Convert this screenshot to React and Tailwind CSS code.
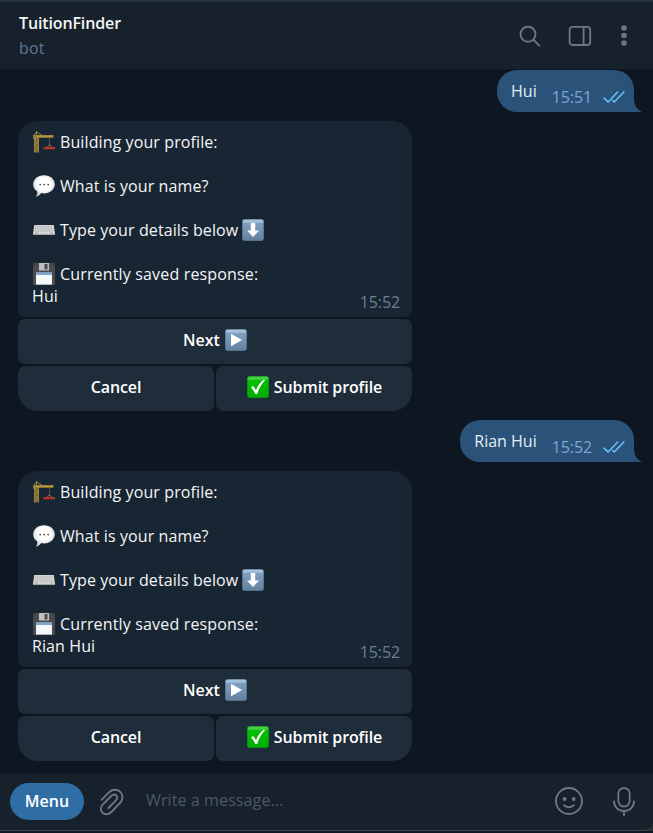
const Svg = ({ className, children, ...props }) => (
  <svg className={`shrink-0 ${className}`} fill="none" strokeLinecap="round" strokeLinejoin="round" {...props}>
    {children}
  </svg>
);

function Crane() {
  return (
    <Svg className="h-[22px] w-[22px]" viewBox="0 0 22 22">
      <rect x="1.500" y="4" width="4" height="17.500" fill="#6b6034" />
      <path d="M1.800 21.500V4M5.200 21.500V4" stroke="#b0923b" strokeWidth="1.100" strokeLinecap="butt" />
      <path d="M1.800 20l3.400-3-3.400-3 3.400-3-3.400-3 3.400-3" stroke="#a58a3a" strokeWidth="0.900" />
      <rect x="0" y="4" width="20.500" height="2.800" fill="#a0863a" />
      <path d="M4 5.500H19.500" stroke="#c9a445" strokeWidth="0.900" strokeDasharray="1.500 1" strokeLinecap="butt" />
      <path d="M3.500 0.600V4M3.500 1L8.500 4M3.500 1L1 4" stroke="#a58b3a" strokeWidth="0.900" />
      <rect x="0" y="4.400" width="2.600" height="3.400" fill="#8b7a42" />
      <path d="M16.500 7v7" stroke="#6c6850" strokeWidth="0.700" />
      <path d="M14.500 16l2-2.500 2 2.500" stroke="#8a8052" strokeWidth="1" />
      <rect x="10.500" y="16.200" width="11.500" height="2" fill="#c9371f" />
    </Svg>
  );
}

function Speech() {
  return (
    <Svg className="h-[22px] w-[22px]" viewBox="0 0 22 22">
      <defs>
        <radialGradient id="speech" cx="50%" cy="40%" r="60%">
          <stop offset="0.500" stopColor="#fff" />
          <stop offset="1" stopColor="#c9c9c9" />
        </radialGradient>
      </defs>
      <path d="M11 0.300C17.200 0.300 21.800 4.200 21.800 9.300S17.200 18.400 11 18.400c-1 0-1.900-.1-2.800-.3C6.800 20.200 5 21.500 2.800 21.800c1-1.500 1.700-3.300 1.500-5.200C1.600 14.900.200 12.300.200 9.300.200 4.200 4.800.300 11 .300Z" fill="url(#speech)" />
      <circle cx="7.200" cy="9.600" r="0.900" fill="#4c4c4c" />
      <circle cx="11.200" cy="9.600" r="0.900" fill="#4c4c4c" />
      <circle cx="15.200" cy="9.600" r="0.900" fill="#4c4c4c" />
    </Svg>
  );
}

function Keyboard() {
  return (
    <Svg className="h-[22px] w-[22px]" viewBox="0 0 22 22">
      <path d="M1.200 6H20.800L22 15V16H0V15Z" fill="#d4d4d4" />
      <path d="M0 15H22V16H0Z" fill="#a4a4a4" />
      <path d="M2.200 7.800H19.800M1.900 9.900H20.100M1.600 12H20.400" stroke="#a2a3a5" strokeWidth="0.900" strokeDasharray="1 0.800" strokeLinecap="butt" />
      <path d="M2 14H5M17 14H20" stroke="#a0a0a0" strokeWidth="0.900" strokeLinecap="butt" />
    </Svg>
  );
}

function Floppy() {
  return (
    <Svg className="h-[22px] w-[22px]" viewBox="0 0 22 22">
      <rect width="22" height="22" rx="0.800" fill="#4a4b4e" />
      <rect x="6" y="0" width="10" height="7.500" fill="#c0c0c0" />
      <rect x="11.500" y="1" width="3" height="5.500" fill="#4a4b4e" />
      <rect x="3" y="9.600" width="16" height="12" fill="#f6f7f8" />
      <rect x="3" y="9.600" width="16" height="2.400" fill="#78a7d2" />
      <path d="M1.300 1v1M20.700 1v1" stroke="#222" strokeWidth="1" />
    </Svg>
  );
}

function Tile({ kind }) {
  const green = kind === "check";
  const id = green ? "tile-green" : "tile-blue";
  return (
    <Svg className="h-[22px] w-[22px]" viewBox="0 0 22 22">
      <defs>
        <linearGradient id={id} x1="0" y1="0" x2="0" y2="1">
          <stop offset="0" stopColor={green ? "#4ad14a" : "#a9c4dd"} />
          <stop offset="0.140" stopColor={green ? "#3fd03f" : "#a1bdd8"} />
          <stop offset="0.180" stopColor={green ? "#03c003" : "#7f9fbe"} />
          <stop offset="1" stopColor={green ? "#00ad00" : "#63819f"} />
        </linearGradient>
      </defs>
      <rect x="0.300" y="0.300" width="21.400" height="21.400" rx="2.600" fill={`url(#${id})`} stroke={green ? "#07a307" : "#5d7a96"} strokeWidth="0.500" />
      {kind === "down" && <path d="M8.800 4H13.200V11.500H17L11 18 5 11.500H8.800Z" fill="#fff" />}
      {kind === "play" && <path d="M6 4.800V17.200L17 11Z" fill="#fff" />}
      {kind === "check" && <path d="M4 11.800L6.200 9.700 9 14.200C10.800 9.800 13 6.500 16.800 3.600L18 4.300C14.400 8.100 11.800 12.600 10.200 18H8.300C7.200 15.500 5.900 13.500 4 11.800Z" fill="#fff" />}
    </Svg>
  );
}

function Outgoing({ text, time }) {
  return (
    <div className="relative mr-[19px] flex h-[42px] items-start self-end rounded-[20px] rounded-br-none bg-[#2b5278] pl-[14px] pr-[9px]">
      <span className="mt-[10px] pl-[0.5px] leading-[22px] text-[#e4ecf2]">{text}</span>
      <span className="ml-[15px] mt-[16px] leading-[22px] tracking-[-0.1px] text-[#7da8d3]">{time}</span>
      <Svg className="ml-[11px] mt-[20px] h-[14px] w-[22px]" viewBox="0 0 22 14" stroke="#65b9f4" strokeWidth="1.700">
        <path d="M1 8.200L5.200 12L14.600 2M9.800 10.600L11.300 12L20.800 2" />
      </Svg>
      <svg className="absolute -right-[7px] bottom-0 h-[14px] w-[8px]" viewBox="0 0 8 14">
        <path d="M0 0H1C1 6 3 11 8 13.200V14H0Z" fill="#2b5278" />
      </svg>
    </div>
  );
}

function Line({ icon, children }) {
  return (
    <div className="flex h-[22px] items-center gap-[5px] pl-px">
      {icon}
      <span className="flex items-center gap-[4px] whitespace-nowrap">{children}</span>
    </div>
  );
}

function Profile({ name }) {
  return (
    <div className="my-[9px] ml-[18px] flex w-[394px] flex-col gap-[2px]">
      <div className="flex h-[196px] flex-col rounded-[7px] rounded-t-[20px] bg-[#182533] px-[14px] pt-[10px] leading-[22px] tracking-[0.1px] text-[#f5f5f5]">
        <div className="flex flex-col gap-[22px]">
          <Line icon={<Crane />}>Building your profile:</Line>
          <Line icon={<Speech />}>What is your name?</Line>
          <Line icon={<Keyboard />}>Type your details below <Tile kind="down" /></Line>
          <Line icon={<Floppy />}><span className="tracking-[0.16px]">Currently saved response:</span></Line>
        </div>
        <div className="flex justify-between">
          <span>{name}</span>
          <span className="-mr-[2px] mt-[6px] tracking-[-0.1px] text-[#6d7f8f]">15:52</span>
        </div>
      </div>
      <button className="flex h-[45px] items-center justify-center gap-[5px] rounded-[7px] bg-[#1f2c3a] pb-[3px] font-semibold text-white">
        Next <Tile kind="play" />
      </button>
      <div className="grid h-[45px] grid-cols-2 gap-[2px] font-semibold tracking-[-0.1px] text-white">
        <button className="rounded-[7px] rounded-bl-[20px] bg-[#1f2c3a] pb-[3px]">Cancel</button>
        <button className="flex items-center justify-center gap-[5px] rounded-[7px] rounded-br-[20px] bg-[#1f2c3a] pb-[3px] pl-px">
          <Tile kind="check" /> Submit profile
        </button>
      </div>
    </div>
  );
}

export default function App() {
  return (
    <div className="flex h-[833px] w-[653px] flex-col overflow-hidden bg-[#0e1621] font-['Open_Sans','Noto_Sans',sans-serif] text-[16px]">
      <header className="flex h-[69px] shrink-0 justify-between border-t-2 border-[#242f3d] bg-[#17212b] pl-[19px] pr-[26px]">
        <div className="pt-[10px] leading-[22px]">
          <div className="font-semibold tracking-[-0.13px] text-[#f5f5f5]">TuitionFinder</div>
          <div className="mt-[3px] tracking-[0.2px] text-[#5b7898]">bot</div>
        </div>
        <div className="flex items-start pt-[23px]">
          <Svg className="h-[22px] w-[22px]" viewBox="0 0 22 22" stroke="#6c7883" strokeWidth="1.900">
            <circle cx="9" cy="9.300" r="7.500" />
            <path d="M14.500 14.800L20.300 20.600" />
          </Svg>
          <Svg className="ml-[27px] h-[22px] w-[24px]" viewBox="0 0 24 22" stroke="#6c7883" strokeWidth="1.800">
            <rect x="1.600" y="1.800" width="20.600" height="18.200" rx="3" />
            <path d="M15.600 2V20" />
          </Svg>
          <Svg className="ml-[29px] h-[22px] w-[6px]" viewBox="0 0 6 22" fill="#6c7883">
            <circle cx="3" cy="3" r="2.800" />
            <circle cx="3" cy="10.500" r="2.800" />
            <circle cx="3" cy="18" r="2.800" />
          </Svg>
        </div>
      </header>
      <main className="flex h-[704px] shrink-0 flex-col pt-px">
        <Outgoing text="Hui" time="15:51" />
        <Profile name="Hui" />
        <Outgoing text="Rian Hui" time="15:52" />
        <Profile name="Rian Hui" />
      </main>
      <footer className="bg-[#2b2d30]">
        <div className="flex h-[58px] items-start rounded-br-[8px] border-b border-[#42494f] bg-[#17212b] pl-[10px] pr-[18px]">
          <button className="mt-[10px] h-[37px] w-[74px] rounded-full bg-[#2f6ea5] pb-[2px] font-semibold text-white">Menu</button>
          <Svg className="ml-[15px] mt-[15px] h-[28px] w-[26px]" viewBox="0 0 26 28" stroke="#6c7883" strokeWidth="1.900">
            <path d="M2.600 11.800L9.600 4.600C13.200.900 18.300.900 21.300 3.900s2.800 7.700-.2 10.900L12.400 24C9.700 26.700 5.800 26.900 3.500 24.600s-2.100-5.600.4-8.200L12.200 8C14 6.300 16 6.300 17.300 7.500s1.200 3.200-.4 4.900L9.500 20" />
          </Svg>
          <span className="ml-[21px] mt-[16px] flex-1 leading-[22px] tracking-[0.11px] text-[#4c5864]">Write a message...</span>
          <Svg className="mt-[14px] h-[28px] w-[28px]" viewBox="0 0 28 28" stroke="#6c7883" strokeWidth="1.800">
            <circle cx="14" cy="14" r="13" />
            <path d="M9 18.200c2.600 2.700 7.400 2.700 10 0" />
            <circle cx="9.600" cy="12" r="1.900" fill="#6c7883" stroke="none" />
            <circle cx="18.700" cy="12" r="1.900" fill="#6c7883" stroke="none" />
          </Svg>
          <Svg className="ml-[30px] mt-[14px] h-[30px] w-[22px]" viewBox="0 0 22 30" stroke="#6c7883" strokeWidth="1.800" strokeLinecap="butt">
            <rect x="5.300" y="1" width="11.400" height="18.500" rx="5.700" />
            <path d="M.900 13.600C.900 20 5 24 11 24s10.100-4 10.100-10.400M11 24v5" />
          </Svg>
        </div>
      </footer>
    </div>
  );
}
